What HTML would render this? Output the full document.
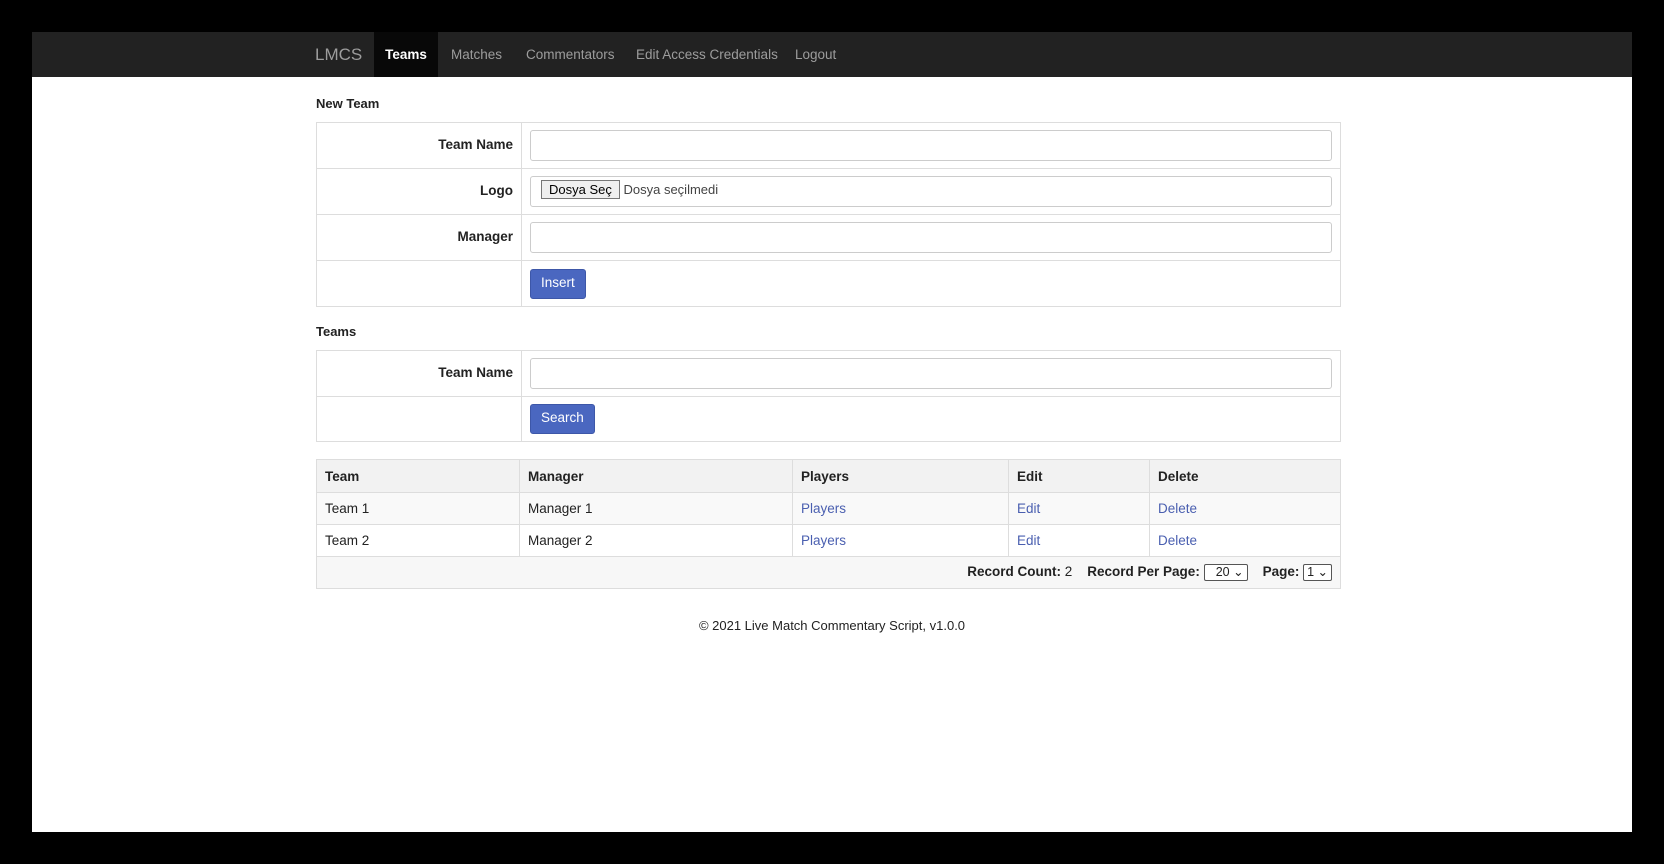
<!DOCTYPE html>
<html><head><meta charset="utf-8"><style>
*{box-sizing:border-box}
body{margin:0;background:#000;width:1664px;height:864px;overflow:hidden;font-family:"Liberation Sans",Arial,sans-serif;font-size:13.5px;color:#222}
.page{position:absolute;left:32px;top:32px;width:1600px;height:800px;background:#fff}
.nav{height:45px;background:#222;position:relative}
.nav a{position:absolute;top:0;height:45px;line-height:45px;color:#9d9d9d;text-decoration:none;font-size:13.5px}
.abs{position:absolute}
table{border-collapse:collapse;position:absolute;left:284px;width:1025px}
td,th{border:1px solid #ddd;padding:0 8px}
.form td.l{width:205px;text-align:right;font-weight:bold;padding-right:8px;padding-bottom:3px}
.inp{height:31px;border:1px solid #ccc;border-radius:3px;width:100%;background:#fff}
.btn{display:inline-block;background:#4a67c0;color:#fff;border:1px solid #3d57a8;border-radius:3px;height:30px;line-height:26px;padding:0 10px;font-size:13.5px}
h4{position:absolute;left:284px;margin:0;font-size:13px;font-weight:bold}
.grid th{background:#f2f2f2;text-align:left;height:33px}
.grid td{height:32px;background:#f9f9f9}
.grid tr.w td{background:#fff}
a.lk{color:#4a5fb0;text-decoration:none}
.sel{display:inline-block;border:1px solid #555;border-radius:2px;height:17px;line-height:15px;font-size:12.5px;font-weight:normal;padding:0 3px;vertical-align:middle;background:#fff}
</style></head><body><div class="page">
<div class="nav">
<a style="left:283px;font-size:17px;color:#9d9d9d">LMCS</a>
<a style="left:342px;width:64px;background:#080808;color:#fff;text-align:center;font-weight:bold">Teams</a>
<a style="left:419px">Matches</a>
<a style="left:494px">Commentators</a>
<a style="left:604px">Edit Access Credentials</a>
<a style="left:763px">Logout</a>
</div>
<h4 style="top:64px">New Team</h4>
<table class="form" style="top:90px">
<tr style="height:46px"><td class="l">Team Name</td><td><div class="inp"></div></td></tr>
<tr style="height:46px"><td class="l">Logo</td><td><div class="inp" style="padding:5px 10px;font-size:13px;color:#444"><span style="border:1px solid #777;background:#efefef;padding:1px 7px;color:#000">Dosya Seç</span> Dosya seçilmedi</div></td></tr>
<tr style="height:46px"><td class="l">Manager</td><td><div class="inp"></div></td></tr>
<tr style="height:46px"><td class="l"></td><td><span class="btn">Insert</span></td></tr>
</table>
<h4 style="top:292px">Teams</h4>
<table class="form" style="top:318px">
<tr style="height:46px"><td class="l">Team Name</td><td><div class="inp"></div></td></tr>
<tr style="height:45px"><td class="l"></td><td><span class="btn">Search</span></td></tr>
</table>
<table class="grid" style="top:427px">
<tr><th style="width:203px">Team</th><th style="width:273px">Manager</th><th style="width:216px">Players</th><th style="width:141px">Edit</th><th>Delete</th></tr>
<tr><td>Team 1</td><td>Manager 1</td><td><a class="lk">Players</a></td><td><a class="lk">Edit</a></td><td><a class="lk">Delete</a></td></tr>
<tr class="w"><td>Team 2</td><td>Manager 2</td><td><a class="lk">Players</a></td><td><a class="lk">Edit</a></td><td><a class="lk">Delete</a></td></tr>
<tr><td colspan="5" style="text-align:right;font-weight:bold;background:#f7f7f7;height:32px">Record Count: <span style="font-weight:normal">2</span> &nbsp;&nbsp; Record Per Page: <span class="sel" style="width:44px">20 ⌄</span> &nbsp;&nbsp; Page: <span class="sel">1 ⌄</span></td></tr>
</table>
<div class="abs" style="top:586px;left:0;width:1600px;text-align:center;font-size:13px">© 2021 Live Match Commentary Script, v1.0.0</div>
</div></body></html>
